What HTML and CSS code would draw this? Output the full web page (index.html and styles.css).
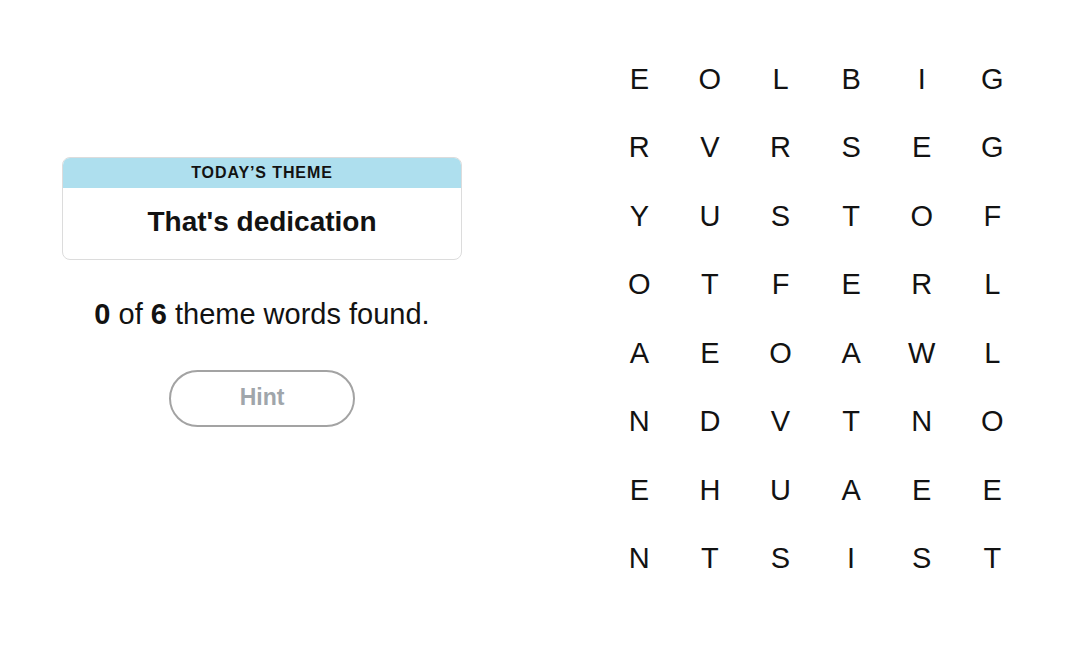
FILE: index.html
```html
<!DOCTYPE html>
<html>
<head>
<meta charset="utf-8">
<link rel="stylesheet" href="styles.css">
</head>
<body>
<main class="page">
  <section class="left">
    <div class="theme-card">
      <div class="theme-head">TODAY’S THEME</div>
      <div class="theme-body">That's dedication</div>
    </div>
    <p class="progress"><b>0</b> of <b>6</b> theme words found.</p>
    <button class="hint">Hint</button>
  </section>
  <section class="grid">
    <span>E</span><span>O</span><span>L</span><span>B</span><span>I</span><span>G</span>
    <span>R</span><span>V</span><span>R</span><span>S</span><span>E</span><span>G</span>
    <span>Y</span><span>U</span><span>S</span><span>T</span><span>O</span><span>F</span>
    <span>O</span><span>T</span><span>F</span><span>E</span><span>R</span><span>L</span>
    <span>A</span><span>E</span><span>O</span><span>A</span><span>W</span><span>L</span>
    <span>N</span><span>D</span><span>V</span><span>T</span><span>N</span><span>O</span>
    <span>E</span><span>H</span><span>U</span><span>A</span><span>E</span><span>E</span>
    <span>N</span><span>T</span><span>S</span><span>I</span><span>S</span><span>T</span>
  </section>
</main>
</body>
</html>
```

FILE: styles.css
```css
html, body {
  margin: 0;
  padding: 0;
  background: #fff;
}
body {
  font-family: "Liberation Sans", Arial, sans-serif;
  color: #121212;
}
.page {
  display: flex;
  width: 1085px;
  height: 654px;
}
.left {
  width: 524px;
  display: flex;
  flex-direction: column;
  align-items: center;
  padding-top: 157px;
  box-sizing: border-box;
}
.theme-card {
  width: 400px;
  height: 103px;
  box-sizing: border-box;
  border: 1px solid #dcdcdc;
  border-radius: 8px;
  overflow: hidden;
  display: flex;
  flex-direction: column;
}
.theme-head {
  background: #aedfee;
  height: 30px;
  line-height: 30px;
  text-align: center;
  font-weight: 700;
  font-size: 16px;
  letter-spacing: 0.9px;
  color: #121212;
}
.theme-body {
  flex: 1;
  display: flex;
  align-items: center;
  justify-content: center;
  font-weight: 700;
  font-size: 28px;
  padding-bottom: 4px;
}
.progress {
  margin: 38px 0 0 0;
  font-size: 29px;
  line-height: 32px;
  text-align: center;
}
.hint {
  margin-top: 40px;
  width: 186px;
  height: 57px;
  border: 2px solid #a3a3a3;
  border-radius: 30px;
  background: #fff;
  font-family: "Liberation Sans", Arial, sans-serif;
  font-weight: 700;
  font-size: 23px;
  color: #a0a6ab;
  padding: 0 0 3px 0;
}
.grid {
  margin-left: 80px;
  margin-top: 45px;
  display: grid;
  grid-template-columns: repeat(6, 70.6px);
  grid-auto-rows: 68.5px;
  align-self: flex-start;
}
.grid span {
  display: flex;
  align-items: center;
  justify-content: center;
  font-size: 29px;
  color: #121212;
}
```
